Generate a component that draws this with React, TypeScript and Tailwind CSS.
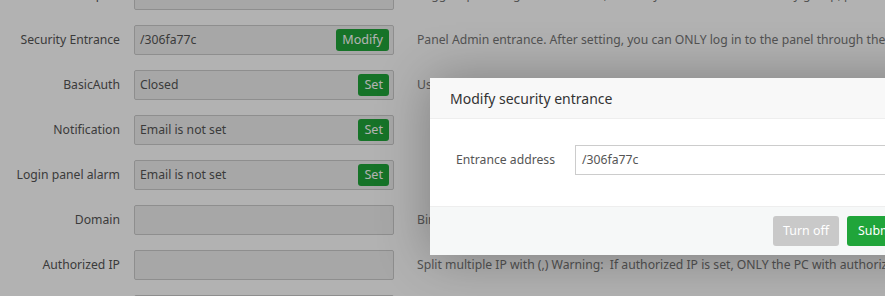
import React from "react";

const font = { fontFamily: '"Noto Sans", "Open Sans", Arial, sans-serif' };

type Row = { label: string; value?: string; btn?: string; desc?: string };

const rows: Row[] = [
  { label: "Panel port", value: "", desc: "Suggest port range 8888 - 65535, note: if your server has a security group, please open new port" },
  { label: "Security Entrance", value: "/306fa77c", btn: "Modify", desc: "Panel Admin entrance. After setting, you can ONLY log in to the panel through the specified security entrance" },
  { label: "BasicAuth", value: "Closed", btn: "Set", desc: "Use BasicAuth to add an extra layer of authentication" },
  { label: "Notification", value: "Email is not set", btn: "Set", desc: "" },
  { label: "Login panel alarm", value: "Email is not set", btn: "Set", desc: "" },
  { label: "Domain", value: "", desc: "Bind domain name to access the panel, note: once bound, the panel can only be accessed by domain" },
  { label: "Authorized IP", value: "", desc: "Split multiple IP with (,) Warning:\u00a0 If authorized IP is set, ONLY the PC with authorized IP can access the panel" },
  { label: "Binding time", value: "", desc: "" },
];

export default function App() {
  return (
    <div className="relative w-[885px] h-[296px] overflow-hidden bg-white" style={font}>
      <div className="flex flex-col gap-[15px] mt-[-20px]">
        {rows.map((r, i) => (
          <div key={i} className="flex items-center h-[30px]">
            <div className="w-[120px] shrink-0 text-right text-[12.2px] text-[#555] whitespace-nowrap pt-[1px]">{r.label}</div>
            <div className="ml-[14px] w-[260px] h-[30px] shrink-0 border border-[#ccc] bg-[#f0f0f0] rounded-[2px] flex items-center justify-between pl-[5px] pr-[4px]">
              <span className="text-[12.2px] text-[#555] pt-[1px]">{r.value}</span>
              {r.btn && (
                <span className="h-[22px] px-[6px] rounded-[3px] bg-[#20a53a] text-white text-[12.6px] leading-[22px]">{r.btn}</span>
              )}
            </div>
            <div className="ml-[23px] text-[12.2px] text-[#777] whitespace-nowrap pt-[1px]">{r.desc}</div>
          </div>
        ))}
      </div>

      <div className="absolute inset-0 bg-black/30" />

      <div className="absolute left-[430px] top-[78px] w-[560px] bg-white shadow-[1px_1px_50px_rgba(0,0,0,0.3)]">
        <div className="h-[41px] bg-[#f8f8f8] border-b border-[#eee] flex items-center pl-[20px] text-[14px] text-[#333]">
          Modify security entrance
        </div>
        <div className="h-[87px] flex items-start pt-[26px]">
          <div className="w-[125px] shrink-0 text-right text-[12.2px] text-[#555] leading-[30px]">Entrance address</div>
          <div className="ml-[20px] w-[380px] h-[30px] border border-[#ccc] flex items-center pl-[6px] text-[12.2px] text-[#555]">
            /306fa77c
          </div>
        </div>
        <div className="h-[49px] bg-[#f6f8f8] border-t border-[#eee] flex items-center pl-[343px] gap-[8px]">
          <div className="h-[30px] w-[66px] text-center rounded-[3px] bg-[#c9c9c9] text-white text-[12.4px] leading-[30px]">Turn off</div>
          <div className="h-[30px] px-[11px] rounded-[3px] bg-[#20a53a] text-white text-[12.4px] leading-[30px]">Submit</div>
        </div>
      </div>
    </div>
  );
}
